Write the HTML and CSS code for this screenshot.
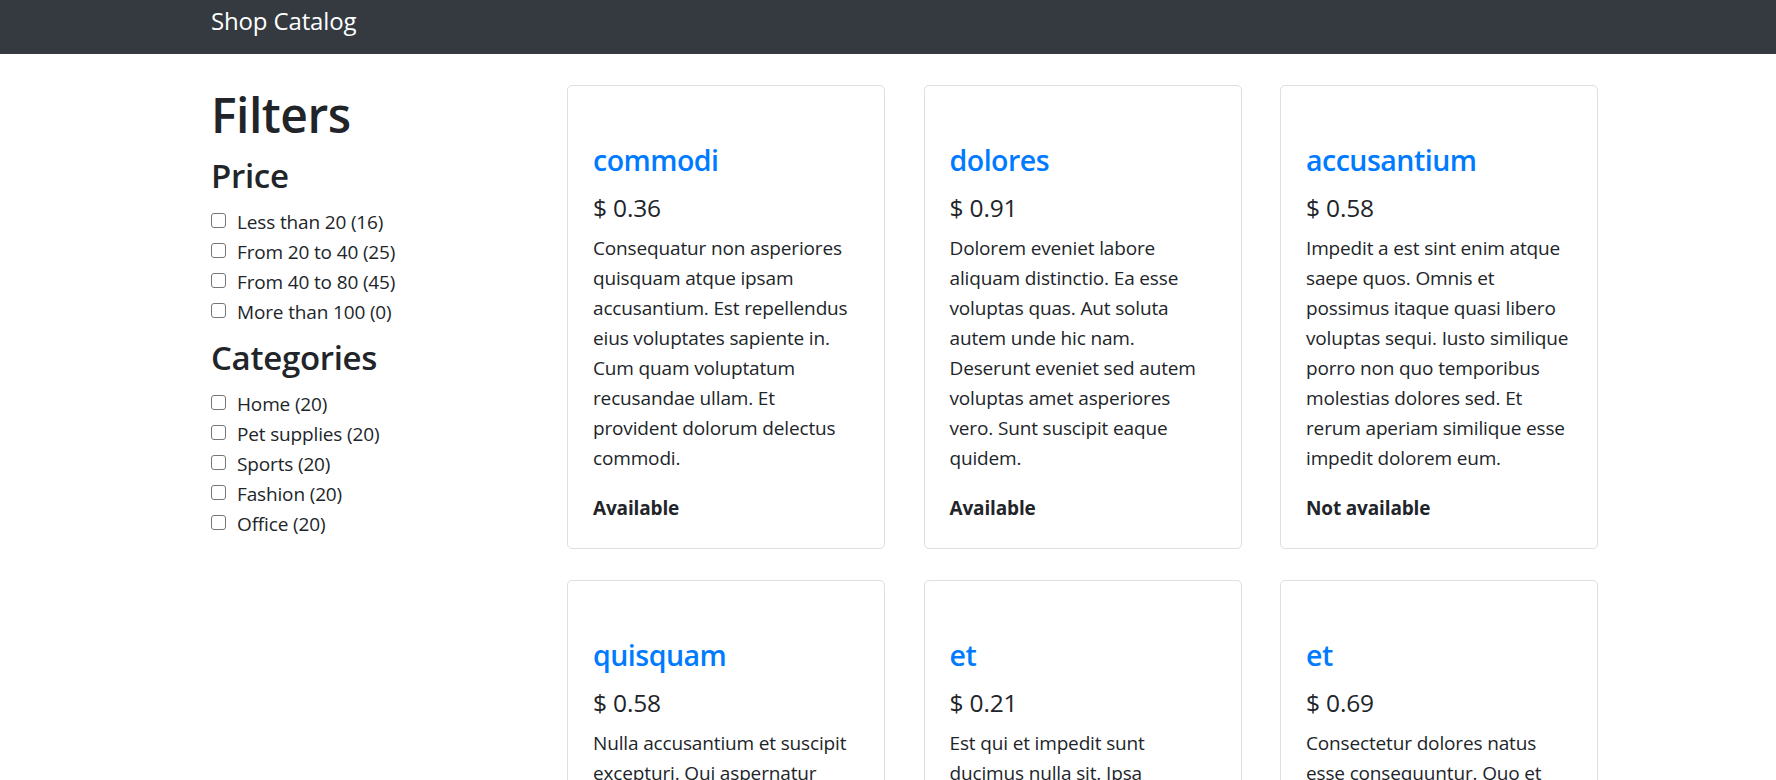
FILE: index.html
```html
<!DOCTYPE html>
<html lang="en">
<head>
<meta charset="utf-8">
<title>Shop Catalog</title>
<link rel="stylesheet" href="styles.css">
</head>
<body>
<nav class="navbar">
  <div class="container">
    <a class="brand" href="#">Shop Catalog</a>
  </div>
</nav>
<div class="container">
  <div class="layout">
    <aside class="filters">
      <h1 class="filters-title">Filters</h1>
      <section class="filter-group">
        <h3 class="group-title">Price</h3>
        <label class="check"><input type="checkbox"><span>Less than 20 (16)</span></label>
        <label class="check"><input type="checkbox"><span>From 20 to 40 (25)</span></label>
        <label class="check"><input type="checkbox"><span>From 40 to 80 (45)</span></label>
        <label class="check"><input type="checkbox"><span>More than 100 (0)</span></label>
      </section>
      <section class="filter-group">
        <h3 class="group-title">Categories</h3>
        <label class="check"><input type="checkbox"><span>Home (20)</span></label>
        <label class="check"><input type="checkbox"><span>Pet supplies (20)</span></label>
        <label class="check"><input type="checkbox"><span>Sports (20)</span></label>
        <label class="check"><input type="checkbox"><span>Fashion (20)</span></label>
        <label class="check"><input type="checkbox"><span>Office (20)</span></label>
      </section>
    </aside>
    <main class="products">
      <div class="card">
        <h4 class="card-title">commodi</h4>
        <h5 class="price">$ 0.36</h5>
        <p class="desc">Consequatur non asperiores quisquam atque ipsam accusantium. Est repellendus eius voluptates sapiente in. Cum quam voluptatum recusandae ullam. Et provident dolorum delectus commodi.</p>
        <p class="stock">Available</p>
      </div>
      <div class="card">
        <h4 class="card-title">dolores</h4>
        <h5 class="price">$ 0.91</h5>
        <p class="desc">Dolorem eveniet labore aliquam distinctio. Ea esse voluptas quas. Aut soluta autem unde hic nam. Deserunt eveniet sed autem voluptas amet asperiores vero. Sunt suscipit eaque quidem.</p>
        <p class="stock">Available</p>
      </div>
      <div class="card">
        <h4 class="card-title">accusantium</h4>
        <h5 class="price">$ 0.58</h5>
        <p class="desc">Impedit a est sint enim atque saepe quos. Omnis et possimus itaque quasi libero voluptas sequi. Iusto similique porro non quo temporibus molestias dolores sed. Et rerum aperiam similique esse impedit dolorem eum.</p>
        <p class="stock">Not available</p>
      </div>
      <div class="card">
        <h4 class="card-title">quisquam</h4>
        <h5 class="price">$ 0.58</h5>
        <p class="desc">Nulla accusantium et suscipit excepturi. Qui aspernatur voluptatem dolor sint. Quia rerum ut et aut iste. Aut nemo quae dolor.</p>
        <p class="stock">Available</p>
      </div>
      <div class="card">
        <h4 class="card-title">et</h4>
        <h5 class="price">$ 0.21</h5>
        <p class="desc">Est qui et impedit sunt ducimus nulla sit. Ipsa voluptatem enim consequatur. Velit quae et aut dolorem sed.</p>
        <p class="stock">Available</p>
      </div>
      <div class="card">
        <h4 class="card-title">et</h4>
        <h5 class="price">$ 0.69</h5>
        <p class="desc">Consectetur dolores natus esse consequuntur. Quo et rerum cumque id. Minima aut voluptatem et quas.</p>
        <p class="stock">Not available</p>
      </div>
    </main>
  </div>
</div>
</body>
</html>
```
FILE: styles.css
```css
* { box-sizing: border-box; }

body {
  margin: 0;
  font-family: "Open Sans", "Noto Sans", sans-serif;
  font-size: 19px;
  letter-spacing: -0.15px;
  line-height: 30px;
  color: #212529;
  background: #fff;
}

.container {
  width: 1386px;
  margin-left: 211px;
}

.navbar {
  height: 54px;
  background: #343a40;
}

.brand {
  display: inline-block;
  padding-top: 2px;
  font-size: 24px;
  line-height: 37.5px;
  color: #fff;
  text-decoration: none;
}

.layout {
  display: grid;
  grid-template-columns: 356px 1fr;
  padding-top: 31px;
}

.filters-title {
  margin: 0 0 10px;
  font-size: 48px;
  line-height: 60px;
  letter-spacing: -0.5px;
  font-weight: 600;
}

.filter-group + .filter-group {
  margin-top: 10px;
}

.group-title {
  margin: 0 0 10px;
  font-size: 33px;
  line-height: 42px;
  letter-spacing: -0.3px;
  font-weight: 600;
}

.check {
  display: flex;
  align-items: flex-start;
  gap: 11px;
}

.check input {
  appearance: none;
  -webkit-appearance: none;
  flex: none;
  width: 15px;
  height: 15px;
  margin: 6px 0 0;
  border: 1px solid #767676;
  border-radius: 3px;
  background: #fff;
}

.products {
  display: grid;
  grid-template-columns: repeat(3, 318px);
  column-gap: 38.5px;
  row-gap: 31px;
  align-items: start;
}

.card {
  border: 1px solid rgba(0, 0, 0, 0.125);
  border-radius: 5px;
  padding: 56px 25px 25px;
}

.card-title {
  margin: 0 0 15px;
  font-size: 28.5px;
  line-height: 36px;
  letter-spacing: -0.5px;
  font-weight: 600;
  color: #007bff;
}

.price {
  margin: 0 0 10px;
  font-size: 24.5px;
  line-height: 30px;
  font-weight: 500;
}

.desc {
  margin: 0 0 20px;
}

.stock {
  margin: 0;
  font-weight: 700;
}
```
